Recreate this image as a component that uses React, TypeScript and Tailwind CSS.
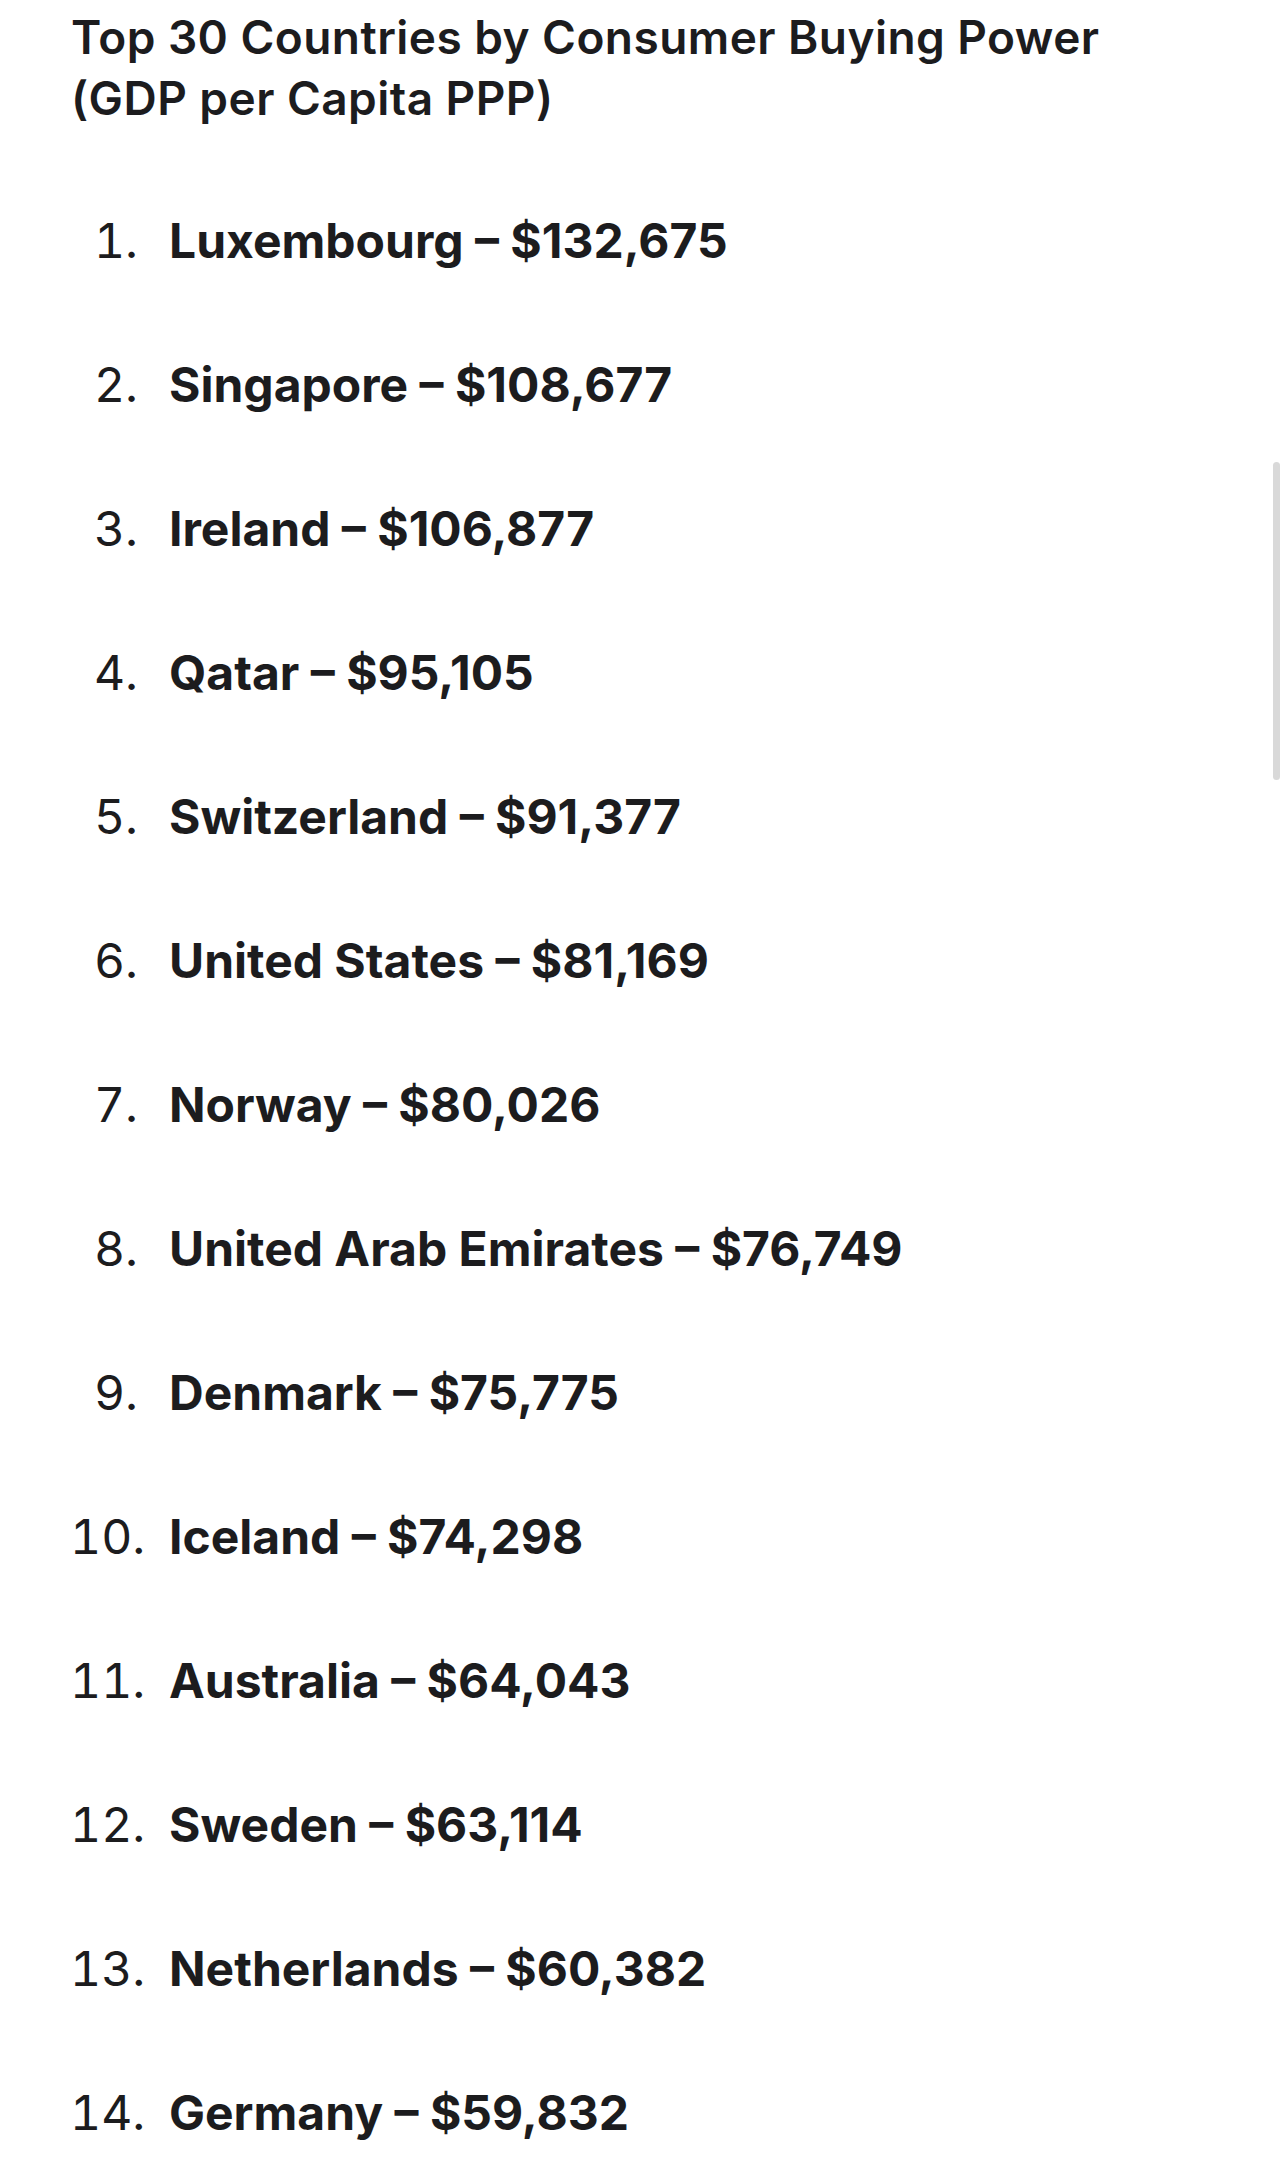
const countries = [
  { name: 'Luxembourg', value: '$132,675' },
  { name: 'Singapore', value: '$108,677' },
  { name: 'Ireland', value: '$106,877' },
  { name: 'Qatar', value: '$95,105' },
  { name: 'Switzerland', value: '$91,377' },
  { name: 'United States', value: '$81,169' },
  { name: 'Norway', value: '$80,026' },
  { name: 'United Arab Emirates', value: '$76,749' },
  { name: 'Denmark', value: '$75,775' },
  { name: 'Iceland', value: '$74,298' },
  { name: 'Australia', value: '$64,043' },
  { name: 'Sweden', value: '$63,114' },
  { name: 'Netherlands', value: '$60,382' },
  { name: 'Germany', value: '$59,832' },
];

export default function App() {
  return (
    <div className="relative w-full h-[2162px] overflow-hidden bg-white text-[#1c1c1e] font-['Inter',sans-serif]">
      <div className="pl-[71px] pr-10 pt-[7px]">
        {/* Title */}
        <h1 className="text-[46px] leading-[61px] font-semibold tracking-[0.45px]">
          Top 30 Countries by Consumer Buying Power
          <br />
          (GDP per Capita PPP)
        </h1>

        {/* Ranking list */}
        <ol className="mt-[76px] -ml-px">
          {countries.map((c, i) => (
            <li key={c.name} className="flex items-baseline text-[48px] leading-[72px] mb-[72px]">
              <span className="w-[68px] text-right font-normal tabular-nums">{i + 1}.</span>
              <span className="ml-[31px] font-bold">
                {c.name} – {c.value}
              </span>
            </li>
          ))}
        </ol>
      </div>

      {/* Scroll indicator */}
      <div className="absolute right-0 top-[462px] w-[7px] h-[318px] rounded-full bg-[#d9d9d9]" />
    </div>
  );
}
